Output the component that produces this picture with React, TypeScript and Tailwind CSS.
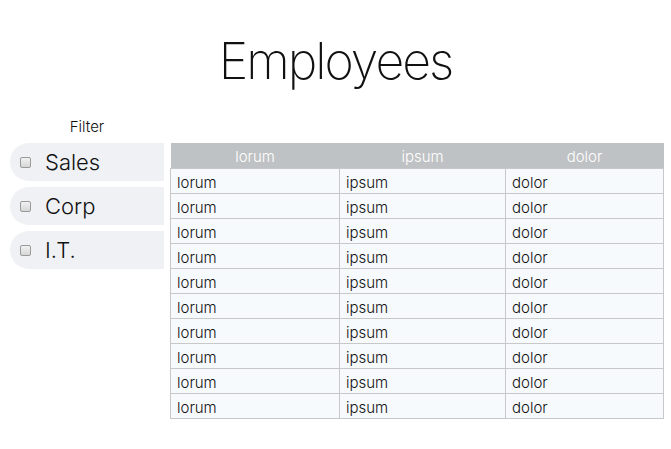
import React from "react";

const filters = ["Sales", "Corp", "I.T."];
const rows = Array.from({ length: 10 });

function Box() {
  return (
    <span className="inline-block w-[11px] h-[11px] rounded-[2px] border border-[#9a9a9a] bg-gradient-to-b from-[#f2f2f2] to-[#d6d6d6]" />
  );
}

export default function App() {
  return (
    <div
      className="w-[671px] h-[449px] bg-white text-[#111]"
      style={{ fontFamily: "Inter, 'Noto Sans', sans-serif" }}
    >
      <h1 className="pt-[29px] h-[112px] text-center text-[50px] leading-[64px] font-extralight tracking-[-2px]">
        Employees
      </h1>
      <div className="flex items-start pl-[10px] gap-[6px]">
        <div className="w-[154px] shrink-0">
          <div className="text-center text-[15px] leading-[30px] font-light h-[31px]">
            Filter
          </div>
          <div className="flex flex-col gap-[6px]">
            {filters.map((f) => (
              <label
                key={f}
                className="flex items-center h-[38px] rounded-l-full bg-[#eff1f4] pl-[10px] gap-[14px]"
              >
                <Box />
                <span className="text-[22px] font-light">{f}</span>
              </label>
            ))}
          </div>
        </div>
        <table className="mt-[31px] w-[494px] shrink-0 border-collapse text-[15px] font-light table-fixed">
          <thead>
            <tr className="bg-[#bfc2c4] text-white h-[25px]">
              <th className="w-[169px] font-light pt-[3px] leading-[18px]">lorum</th>
              <th className="w-[166px] font-light pt-[3px] leading-[18px]">ipsum</th>
              <th className="font-light pt-[3px] leading-[18px]">dolor</th>
            </tr>
          </thead>
          <tbody>
            {rows.map((_, i) => (
              <tr key={i} className="bg-[#f7fafd] h-[25px]">
                <td className="border border-[#c8c8c8] pl-[6px] pt-[4px] leading-[18px]">lorum</td>
                <td className="border border-[#c8c8c8] pl-[6px] pt-[4px] leading-[18px]">ipsum</td>
                <td className="border border-[#c8c8c8] pl-[6px] pt-[4px] leading-[18px]">dolor</td>
              </tr>
            ))}
          </tbody>
        </table>
      </div>
    </div>
  );
}
